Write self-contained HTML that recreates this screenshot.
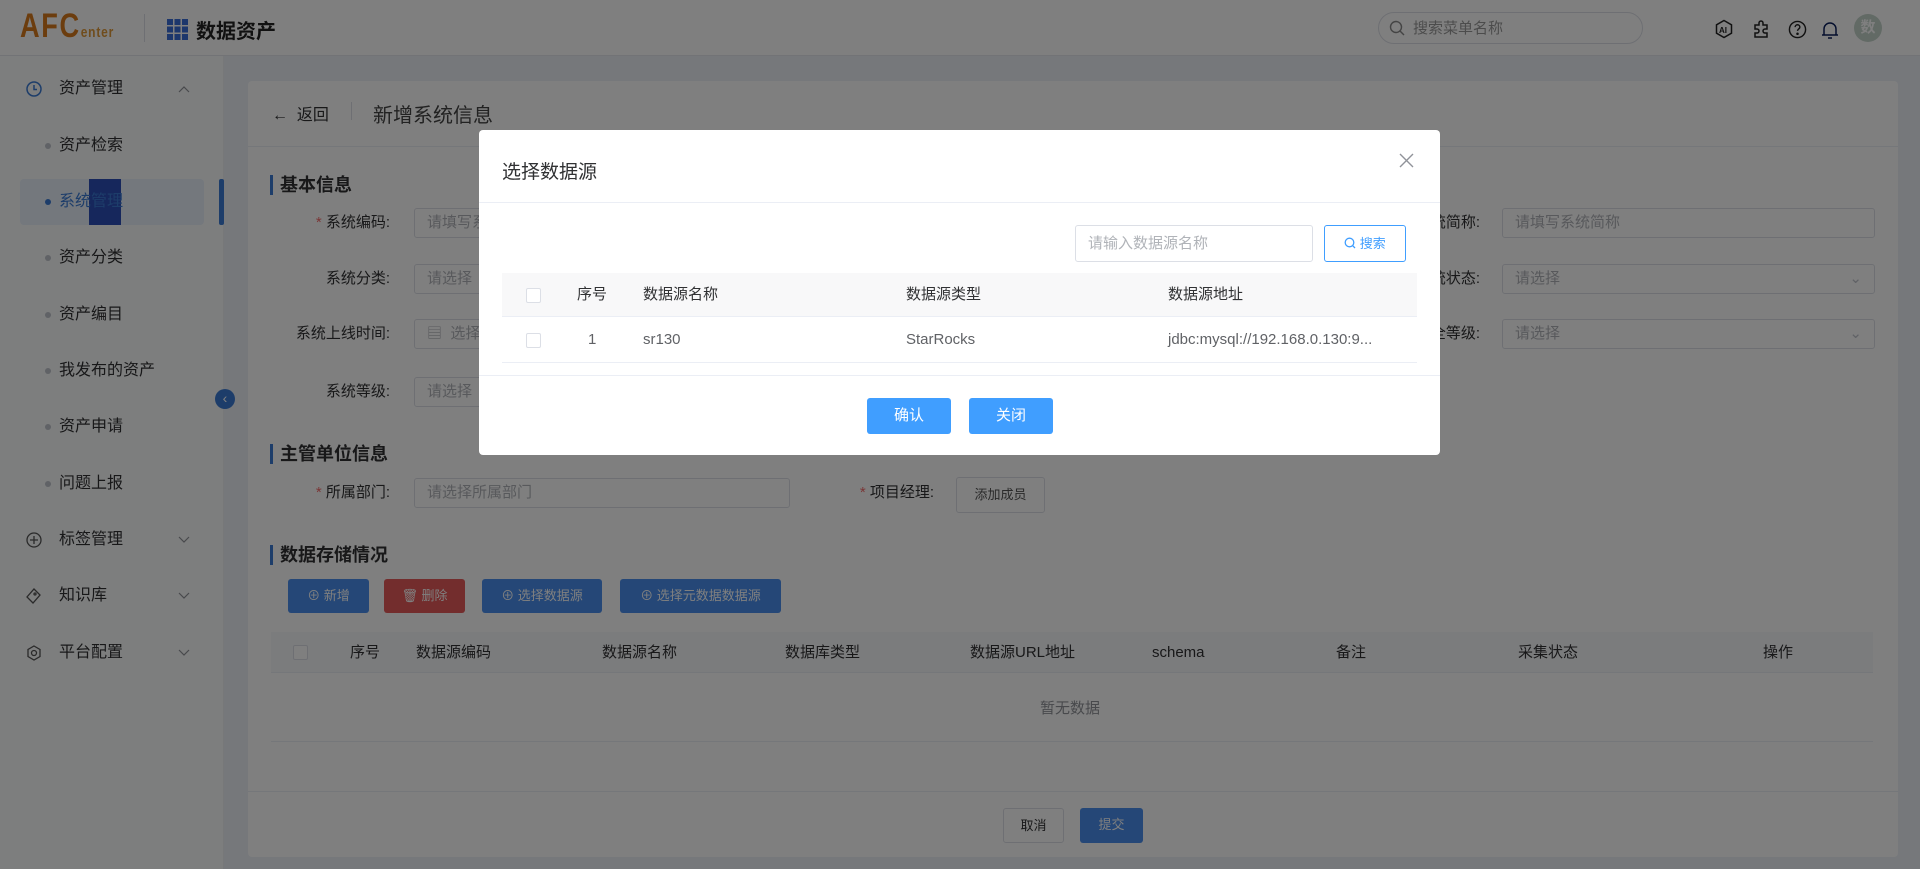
<!DOCTYPE html>
<html><head><meta charset="utf-8"><style>
*{box-sizing:border-box;margin:0;padding:0}
body{width:1920px;height:869px;overflow:hidden;position:relative;font-family:"Liberation Sans","Noto Sans CJK SC",sans-serif;font-size:15px;color:#303133;background:#edf1f7}
.a{position:absolute}
.hdr{left:0;top:0;width:1920px;height:56px;background:#fff;border-bottom:1px solid #e4e7ed}
.side{left:0;top:56px;width:224px;height:813px;background:#fbfcfd;border-right:1px solid #eef0f3}
.mi{position:absolute;left:59px;font-size:16px;color:#303133;line-height:20px}
.dot{position:absolute;left:45px;width:6px;height:6px;border-radius:50%;background:#c0c4cc}
.card{left:248px;top:81px;width:1650px;height:776px;background:#fff;border-radius:4px}
.lbl{position:absolute;text-align:right;font-size:15px;line-height:30px}
.inp{position:absolute;height:30px;border:1px solid #dcdfe6;border-radius:3px;padding-left:12px;color:#b0b3b8;font-size:15px;line-height:28px;background:#fff}
.st{position:absolute;left:270px;font-size:18px;font-weight:bold;border-left:3px solid #3a7bd5;padding-left:7px;line-height:20px}
.btn{position:absolute;height:34px;border-radius:3px;color:#fff;font-size:13px;line-height:34px;text-align:center}
.th{position:absolute;font-size:15px;line-height:20px}
.cb{position:absolute;width:15px;height:15px;border:1px solid #dcdfe6;border-radius:2px;background:#fff}
.ov{left:0;top:0;width:1920px;height:869px;background:rgba(0,0,0,.5)}
.md{left:479px;top:130px;width:961px;height:325px;background:#fff;border-radius:4px}
</style></head><body>
<div class="a hdr">
 <div class="a" style="left:20px;top:10px;font-size:34px;color:#d97a1c;font-weight:bold;letter-spacing:2px;transform:scaleX(.8);transform-origin:left;line-height:32px">AFC<span style="font-size:15px;color:#e09a3a;letter-spacing:1px">enter</span></div>
 <div class="a" style="left:144px;top:14px;width:1px;height:28px;background:#dcdfe6"></div>
 <svg class="a" style="left:167px;top:19px" width="21" height="21" viewBox="0 0 21 21" fill="#3a6fd8"><rect x="0" y="0" width="6" height="6"/><rect x="7.5" y="0" width="6" height="6"/><rect x="15" y="0" width="6" height="6"/><rect x="0" y="7.5" width="6" height="6"/><rect x="7.5" y="7.5" width="6" height="6"/><rect x="15" y="7.5" width="6" height="6"/><rect x="0" y="15" width="6" height="6"/><rect x="7.5" y="15" width="6" height="6"/><rect x="15" y="15" width="6" height="6"/></svg>
 <div class="a" style="left:196px;top:15px;font-size:20px;font-weight:bold;color:#222">数据资产</div>
 <div class="a" style="left:1378px;top:12px;width:265px;height:32px;border:1px solid #dcdfe6;border-radius:16px"></div>
 <svg class="a" style="left:1389px;top:20px" width="16" height="16" viewBox="0 0 16 16" fill="none" stroke="#888" stroke-width="1.4"><circle cx="7" cy="7" r="5.5"/><path d="M11 11l4 4"/></svg>
 <div class="a" style="left:1413px;top:17px;font-size:15px;color:#999">搜索菜单名称</div>
 <svg class="a" style="left:1714px;top:19px" width="20" height="20" viewBox="0 0 20 20" fill="none" stroke="#222" stroke-width="1.5"><path d="M10 1.5l7.5 4.3v8.4L10 18.5 2.5 14.2V5.8z"/><text x="5" y="14" font-size="8" fill="#222" stroke="none" font-weight="bold" font-family="Liberation Sans">AI</text></svg>
 <svg class="a" style="left:1751px;top:18px" width="22" height="22" viewBox="0 0 22 22" fill="none" stroke="#222" stroke-width="1.5"><path d="M4 7h4V5a2 2 0 014 0v2h4v4h-2a2 2 0 000 4h2v4H4v-4h2a2 2 0 000-4H4z"/></svg>
 <svg class="a" style="left:1788px;top:20px" width="19" height="19" viewBox="0 0 20 20" fill="none" stroke="#222" stroke-width="1.5"><circle cx="10" cy="10" r="8.5"/><path d="M7.5 7.5a2.5 2.5 0 115 0c0 1.8-2.5 2-2.5 4"/><circle cx="10" cy="14.5" r=".6" fill="#222"/></svg>
 <svg class="a" style="left:1821px;top:20px" width="18" height="20" viewBox="0 0 18 20" fill="none" stroke="#0a1f5c" stroke-width="1.5"><path d="M3 15V9a6 6 0 0112 0v6zM1 15h16M7 18h4"/></svg>
 <div class="a" style="left:1854px;top:14px;width:28px;height:28px;border-radius:50%;background:#c4d4cb;color:#fff;font-size:15px;text-align:center;line-height:28px;font-weight:bold">数</div>
</div>
<div class="a side">
 <svg class="a" style="left:26px;top:25px" width="16" height="16" viewBox="0 0 16 16" fill="none" stroke="#3a7bd5" stroke-width="1.5"><circle cx="8" cy="8" r="7"/><path d="M8 4v4.5h3"/></svg>
 <div class="mi" style="top:23px">资产管理</div>
 <svg class="a" style="left:178px;top:29px" width="12" height="8" viewBox="0 0 12 8" fill="none" stroke="#909399" stroke-width="1.2"><path d="M1 7l5-5 5 5"/></svg>
 <div class="dot" style="top:87px"></div><div class="mi" style="top:80px">资产检索</div>
 <div class="a" style="left:20px;top:123px;width:184px;height:46px;background:#e8f0fb;border-radius:4px"></div>
 <div class="a" style="left:89px;top:123px;width:32px;height:46px;background:#2d4fb8"></div>
 <div class="dot" style="top:143px;background:#3a7bd5"></div><div class="mi" style="top:136px;color:#3a7bd5">系统管理</div>
 <div class="a" style="left:219px;top:123px;width:5px;height:46px;background:#3a7bd5;border-radius:2px"></div>
 <div class="dot" style="top:199px"></div><div class="mi" style="top:192px">资产分类</div>
 <div class="dot" style="top:256px"></div><div class="mi" style="top:249px">资产编目</div>
 <div class="dot" style="top:312px"></div><div class="mi" style="top:305px">我发布的资产</div>
 <div class="dot" style="top:368px"></div><div class="mi" style="top:361px">资产申请</div>
 <div class="dot" style="top:425px"></div><div class="mi" style="top:418px">问题上报</div>
 <svg class="a" style="left:26px;top:476px" width="16" height="16" viewBox="0 0 16 16" fill="none" stroke="#555" stroke-width="1.3"><circle cx="8" cy="8" r="7"/><path d="M8 4v8M4 8h8"/></svg>
 <div class="mi" style="top:474px">标签管理</div>
 <svg class="a" style="left:178px;top:480px" width="12" height="8" viewBox="0 0 12 8" fill="none" stroke="#909399" stroke-width="1.2"><path d="M1 1l5 5 5-5"/></svg>
 <svg class="a" style="left:26px;top:532px" width="16" height="16" viewBox="0 0 16 16" fill="none" stroke="#555" stroke-width="1.3"><path d="M8 1l6 6-7 8-6-6z"/><circle cx="9" cy="6" r="1"/></svg>
 <div class="mi" style="top:530px">知识库</div>
 <svg class="a" style="left:178px;top:536px" width="12" height="8" viewBox="0 0 12 8" fill="none" stroke="#909399" stroke-width="1.2"><path d="M1 1l5 5 5-5"/></svg>
 <svg class="a" style="left:26px;top:589px" width="16" height="16" viewBox="0 0 16 16" fill="none" stroke="#555" stroke-width="1.3"><path d="M8 1l6 3.5v7L8 15l-6-3.5v-7z"/><circle cx="8" cy="8" r="2.5"/></svg>
 <div class="mi" style="top:587px">平台配置</div>
 <svg class="a" style="left:178px;top:593px" width="12" height="8" viewBox="0 0 12 8" fill="none" stroke="#909399" stroke-width="1.2"><path d="M1 1l5 5 5-5"/></svg>
</div>
<div class="a" style="left:215px;top:389px;width:20px;height:20px;border-radius:50%;background:#3a7bd5;color:#fff;font-size:14px;line-height:19px;text-align:center">‹</div>
<div class="a card"></div>
<div class="a" style="left:272px;top:101px;font-size:16px">←&nbsp; 返回</div>
<div class="a" style="left:351px;top:102px;width:1px;height:18px;background:#dcdfe6"></div>
<div class="a" style="left:373px;top:99px;font-size:20px;color:#444">新增系统信息</div>
<div class="a" style="left:248px;top:146px;width:1650px;height:1px;background:#ebeef5"></div>
<div class="st" style="top:175px">基本信息</div>
<div class="lbl" style="left:260px;width:130px;top:208px"><span style="color:#f56c6c">*</span> 系统编码:</div>
<div class="lbl" style="left:260px;width:130px;top:264px">系统分类:</div>
<div class="lbl" style="left:260px;width:130px;top:319px">系统上线时间:</div>
<div class="lbl" style="left:260px;width:130px;top:377px">系统等级:</div>
<div class="inp" style="left:414px;top:208px;width:300px">请填写系统编码</div>
<div class="inp" style="left:414px;top:264px;width:300px">请选择</div>
<div class="inp" style="left:414px;top:319px;width:300px">▤&nbsp; 选择日期</div>
<div class="inp" style="left:414px;top:377px;width:300px">请选择</div>
<div class="lbl" style="left:1380px;width:100px;top:208px">系统简称:</div>
<div class="lbl" style="left:1380px;width:100px;top:264px">系统状态:</div>
<div class="lbl" style="left:1380px;width:100px;top:319px">安全等级:</div>
<div class="inp" style="left:1502px;top:208px;width:373px">请填写系统简称</div>
<div class="inp" style="left:1502px;top:264px;width:373px">请选择<span style="position:absolute;right:12px;color:#c0c4cc">⌄</span></div>
<div class="inp" style="left:1502px;top:319px;width:373px">请选择<span style="position:absolute;right:12px;color:#c0c4cc">⌄</span></div>
<div class="st" style="top:444px">主管单位信息</div>
<div class="lbl" style="left:260px;width:130px;top:478px"><span style="color:#f56c6c">*</span> 所属部门:</div>
<div class="inp" style="left:414px;top:478px;width:376px">请选择所属部门</div>
<div class="lbl" style="left:840px;width:94px;top:478px"><span style="color:#f56c6c">*</span> 项目经理:</div>
<div class="a" style="left:956px;top:477px;width:89px;height:36px;border:1px solid #dcdfe6;border-radius:3px;font-size:13px;line-height:34px;text-align:center;color:#555">添加成员</div>
<div class="st" style="top:545px">数据存储情况</div>
<div class="btn" style="left:288px;top:579px;width:81px;background:#4a8fee">⊕ 新增</div>
<div class="btn" style="left:384px;top:579px;width:81px;background:#e65a5a">🗑 删除</div>
<div class="btn" style="left:482px;top:579px;width:120px;background:#4a8fee">⊕ 选择数据源</div>
<div class="btn" style="left:620px;top:579px;width:161px;background:#4a8fee">⊕ 选择元数据数据源</div>
<div class="a" style="left:271px;top:632px;width:1602px;height:41px;background:#f7f8fa;border-bottom:1px solid #ebeef5"></div>
<div class="cb" style="left:293px;top:645px"></div>
<div class="th" style="left:350px;top:643px">序号</div>
<div class="th" style="left:416px;top:643px">数据源编码</div>
<div class="th" style="left:602px;top:643px">数据源名称</div>
<div class="th" style="left:785px;top:643px">数据库类型</div>
<div class="th" style="left:970px;top:643px">数据源URL地址</div>
<div class="th" style="left:1152px;top:643px">schema</div>
<div class="th" style="left:1336px;top:643px">备注</div>
<div class="th" style="left:1518px;top:643px">采集状态</div>
<div class="th" style="left:1763px;top:643px">操作</div>
<div class="th" style="left:1040px;top:699px;color:#909399">暂无数据</div>
<div class="a" style="left:271px;top:741px;width:1602px;height:1px;background:#ebeef5"></div>
<div class="a" style="left:248px;top:791px;width:1650px;height:1px;background:#ebeef5"></div>
<div class="a" style="left:1003px;top:808px;width:61px;height:35px;border:1px solid #dcdfe6;border-radius:3px;font-size:13px;line-height:33px;text-align:center">取消</div>
<div class="btn" style="left:1080px;top:808px;width:63px;height:35px;background:#4a8fee">提交</div>
<div class="a ov"></div>
<div class="a md">
 <div class="a" style="left:23px;top:27px;font-size:19px;color:#303133">选择数据源</div>
 <svg class="a" style="left:920px;top:23px" width="15" height="15" viewBox="0 0 15 15" stroke="#909399" stroke-width="1.4"><path d="M1 1l13 13M14 1L1 14"/></svg>
 <div class="a" style="left:0;top:72px;width:961px;height:1px;background:#ebeef5"></div>
 <div class="inp" style="left:596px;top:95px;width:238px;height:37px;line-height:35px">请输入数据源名称</div>
 <div class="a" style="left:845px;top:95px;width:82px;height:37px;border:1px solid #409eff;border-radius:3px;color:#409eff;font-size:13px;line-height:35px;text-align:center"><svg width="12" height="12" viewBox="0 0 12 12" fill="none" stroke="#409eff" stroke-width="1.3" style="vertical-align:-1px"><circle cx="5.5" cy="5.5" r="4.3"/><path d="M8.7 8.7L11 11"/></svg> 搜索</div>
 <div class="a" style="left:23px;top:143px;width:915px;height:44px;background:#f8f8f9;border-bottom:1px solid #ebeef5"></div>
 <div class="cb" style="left:47px;top:158px"></div>
 <div class="th" style="left:98px;top:155px">序号</div>
 <div class="th" style="left:164px;top:155px">数据源名称</div>
 <div class="th" style="left:427px;top:155px">数据源类型</div>
 <div class="th" style="left:689px;top:155px">数据源地址</div>
 <div class="cb" style="left:47px;top:203px"></div>
 <div class="th" style="left:109px;top:200px;color:#606266">1</div>
 <div class="th" style="left:164px;top:200px;color:#606266">sr130</div>
 <div class="th" style="left:427px;top:200px;color:#606266">StarRocks</div>
 <div class="th" style="left:689px;top:200px;color:#606266">jdbc:mysql://192.168.0.130:9...</div>
 <div class="a" style="left:23px;top:232px;width:915px;height:1px;background:#ebeef5"></div>
 <div class="a" style="left:0;top:245px;width:961px;height:1px;background:#ebeef5"></div>
 <div class="btn" style="left:388px;top:268px;width:84px;height:36px;line-height:36px;background:#409eff;font-size:15px">确认</div>
 <div class="btn" style="left:490px;top:268px;width:84px;height:36px;line-height:36px;background:#409eff;font-size:15px">关闭</div>
</div>
</body></html>
